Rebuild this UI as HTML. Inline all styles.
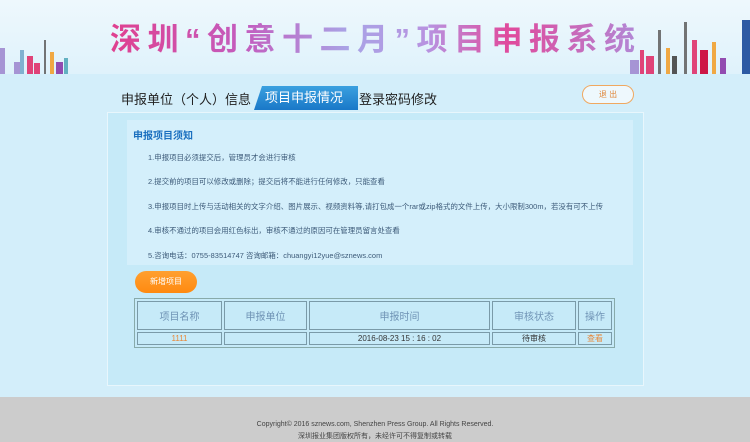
<!DOCTYPE html><html><head><meta charset="utf-8"><style>
*{margin:0;padding:0;box-sizing:border-box}
body{width:750px;height:442px;overflow:hidden;background:#d3eefa;font-family:"Liberation Sans","Noto Sans CJK SC",sans-serif;position:relative}
.hd{position:absolute;left:0;top:0;width:750px;height:74px;background:linear-gradient(#eef8fd,#dff2fb)}
.title{position:absolute;left:110px;top:22px;font-size:31px;line-height:36px;font-weight:bold;letter-spacing:6.5px;white-space:nowrap;background:linear-gradient(90deg,#e0408f 0%,#c35cbe 25%,#a9a4e6 45%,#b892e0 60%,#e04a9c 75%,#b08ad8 100%);-webkit-background-clip:text;color:transparent}
.tabs{position:absolute;top:89px;left:121px;font-size:13px;color:#222}
.tab{position:absolute;top:0;white-space:nowrap}
.act{position:absolute;left:254px;top:86px;width:104px;height:24px;background:linear-gradient(#3aa0e0,#1a78c8);clip-path:polygon(8px 0,100% 0,100% 100%,0 100%);color:#fff;font-size:13px;line-height:24px;padding-left:11px}
.out{position:absolute;left:582px;top:85px;width:52px;height:19px;border:1px solid #f0a860;border-radius:10px;font-size:8px;color:#e08a40;text-align:center;line-height:17px;background:#eef8fd}
.panel{position:absolute;left:107px;top:112px;width:537px;height:274px;background:#c6eaf8;border:1px solid #e8f6fc}
.note{position:absolute;left:127px;top:120px;width:506px;height:145px;background:#d4effb}
.note h3{position:absolute;left:6px;top:7px;font-size:10px;color:#1a6fbf}
.note p{position:absolute;left:21px;font-size:7.4px;color:#3c5a78;white-space:nowrap;letter-spacing:.05px}
.add{position:absolute;left:135px;top:271px;width:62px;height:22px;border-radius:11px;background:linear-gradient(#ffa030,#ff8a10);color:#fff;font-size:8px;text-align:center;line-height:22px}
table{position:absolute;left:134px;top:298px;width:481px;border:1px solid #8aa;border-collapse:separate;border-spacing:2px;background:#c6eaf8;table-layout:fixed}
td{border:1px solid #7a9aa8;text-align:center;font-size:8px;color:#333}
tr.h td{height:29px;font-size:10px;color:#6f93b5}
tr.r td{height:12px}
.o{color:#e8883a}
.ft{position:absolute;left:0;top:397px;width:750px;height:45px;background:#cccccc;text-align:center;font-size:7px;color:#444}
</style></head><body>
<div class="hd">
<svg width="750" height="74" style="position:absolute;left:0;top:0">
<g opacity=".9">
<rect x="14" y="62" width="6" height="12" fill="#a08ad0"/><rect x="20" y="50" width="4" height="24" fill="#7ac"/><rect x="27" y="56" width="6" height="18" fill="#e0306a"/><rect x="34" y="63" width="6" height="11" fill="#e0306a"/><rect x="44" y="40" width="2" height="34" fill="#666"/><rect x="50" y="52" width="4" height="22" fill="#f2a030"/><rect x="56" y="62" width="7" height="12" fill="#8a3aa8"/><rect x="64" y="58" width="4" height="16" fill="#5ab"/><rect x="0" y="48" width="5" height="26" fill="#a08ad0"/>
<rect x="630" y="60" width="9" height="14" fill="#a08ad0"/><rect x="640" y="50" width="4" height="24" fill="#e0306a"/><rect x="646" y="56" width="8" height="18" fill="#e0306a"/><rect x="658" y="30" width="3" height="44" fill="#666"/><rect x="666" y="48" width="4" height="26" fill="#f2a030"/><rect x="672" y="56" width="5" height="18" fill="#444"/><rect x="684" y="22" width="3" height="52" fill="#666"/><rect x="692" y="40" width="5" height="34" fill="#e0306a"/><rect x="700" y="50" width="8" height="24" fill="#c03"/><rect x="712" y="42" width="4" height="32" fill="#f2a030"/><rect x="720" y="58" width="6" height="16" fill="#8a3aa8"/><rect x="742" y="20" width="8" height="54" fill="#1a4a9a"/>
</g></svg>
<div class="title">深圳“创意十二月”项目申报系统</div>
</div>
<div class="tabs"><span class="tab" style="left:0">申报单位（个人）信息</span><span class="tab" style="left:238px">登录密码修改</span></div>
<div class="act">项目申报情况</div>
<div class="out">退 出</div>
<div class="panel"></div>
<div class="note">
<h3>申报项目须知</h3>
<p style="top:32px">1.申报项目必须提交后，管理员才会进行审核</p>
<p style="top:56px">2.提交前的项目可以修改或删除；提交后将不能进行任何修改，只能查看</p>
<p style="top:81px">3.申报项目时上传与活动相关的文字介绍、图片展示、视频资料等,请打包成一个rar或zip格式的文件上传，大小限制300m，若没有可不上传</p>
<p style="top:105px">4.审核不通过的项目会用红色标出，审核不通过的原因可在管理员留言处查看</p>
<p style="top:130px">5.咨询电话：0755-83514747 咨询邮箱：chuangyi12yue@sznews.com</p>
</div>
<div class="add">新增项目</div>
<table><colgroup><col style="width:85px"><col style="width:83px"><col style="width:181px"><col style="width:84px"><col></colgroup><tr class="h"><td>项目名称</td><td>申报单位</td><td>申报时间</td><td>审核状态</td><td>操作</td></tr>
<tr class="r"><td class="o">1111</td><td></td><td>2016-08-23 15 : 16 : 02</td><td>待审核</td><td class="o">查看</td></tr></table>
<div class="ft"><div style="margin-top:24px">Copyright© 2016 sznews.com, Shenzhen Press Group. All Rights Reserved.</div><div style="margin-top:3px">深圳报业集团版权所有，未经许可不得复制或转载</div></div>
</body></html>
